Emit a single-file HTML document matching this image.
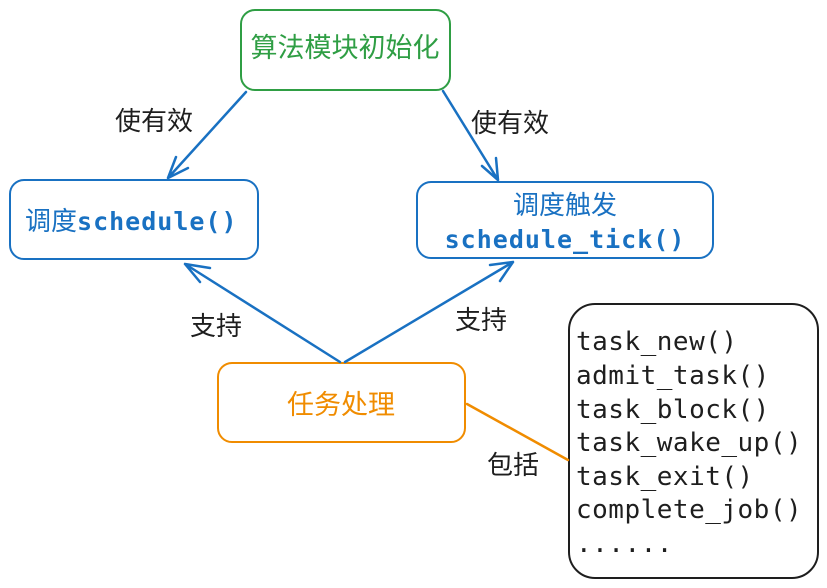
<!DOCTYPE html>
<html><head><meta charset="utf-8"><style>
html,body{margin:0;padding:0;background:#fff;width:827px;height:588px;overflow:hidden}
svg text{font-family:"Liberation Sans","Noto Sans CJK SC",sans-serif}
svg text.m, svg .m text, svg tspan.m{font-family:"DejaVu Sans Mono","Liberation Mono",monospace}
</style></head><body>
<svg width="827" height="588" viewBox="0 0 827 588" xmlns="http://www.w3.org/2000/svg">
<g fill="none" stroke-width="2" stroke-linecap="round" stroke-linejoin="round">
<rect x="241" y="10" width="209" height="80" rx="14" stroke="#2f9e44"/>
<rect x="10" y="180" width="248" height="79" rx="14" stroke="#1971c2"/>
<rect x="417" y="182" width="296" height="76" rx="14" stroke="#1971c2"/>
<rect x="218" y="363" width="247" height="79" rx="14" stroke="#f08c00"/>
<rect x="569" y="304" width="249" height="274" rx="26" stroke="#1e1e1e"/>
<g stroke="#1971c2" stroke-width="2.5">
<path d="M246 92 L168 178 M176 157 L168 178 L188 168"/>
<path d="M443 91 L498 180 M482 166 L498 180 L496 158"/>
<path d="M340 362 L185 264 M210 268 L185 264 L200 282"/>
<path d="M345 362 L513 262 M490 265 L513 262 L500 281"/>
</g>
<path d="M467 404 L568 460" stroke="#f08c00" stroke-width="2.5"/>
</g>
<text x="345" y="57" font-size="27" fill="#2f9e44" text-anchor="middle">算法模块初始化</text>
<text x="25" y="230" font-size="26" fill="#1971c2">调度<tspan class="m" font-size="25" font-weight="bold" letter-spacing="1">schedule()</tspan></text>
<text x="565" y="214" font-size="26" fill="#1971c2" text-anchor="middle">调度触发</text>
<text x="565" y="248" font-size="25" fill="#1971c2" text-anchor="middle" class="m" font-weight="bold" letter-spacing="1">schedule_tick()</text>
<text x="341" y="414" font-size="27" fill="#f08c00" text-anchor="middle">任务处理</text>
<g font-size="26" fill="#1e1e1e">
<text x="115" y="130">使有效</text>
<text x="471" y="132">使有效</text>
<text x="190" y="335">支持</text>
<text x="455" y="329">支持</text>
<text x="487" y="474">包括</text>
</g>
<g class="m" font-size="26" fill="#1e1e1e" letter-spacing="0.5">
<text x="576" y="350">task_new()</text>
<text x="576" y="384">admit_task()</text>
<text x="576" y="418">task_block()</text>
<text x="576" y="451">task_wake_up()</text>
<text x="576" y="485">task_exit()</text>
<text x="576" y="518">complete_job()</text>
<text x="576" y="552">......</text>
</g>
</svg>
</body></html>
